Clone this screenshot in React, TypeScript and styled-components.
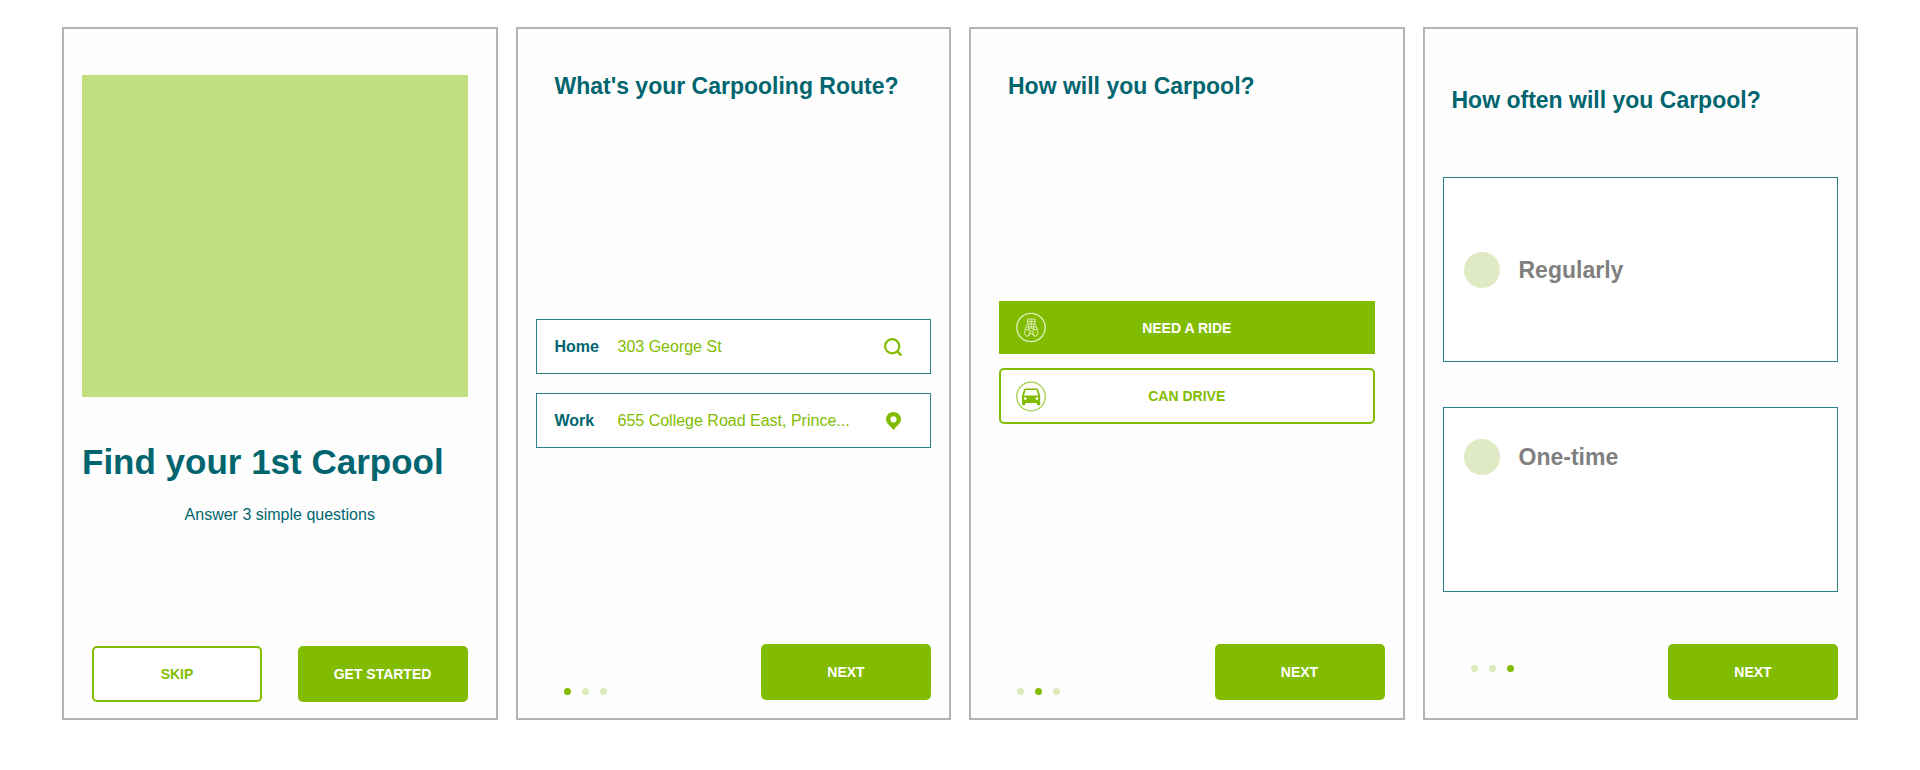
import React, { useState } from 'react';
import styled, { createGlobalStyle } from 'styled-components';

const green = '#82bc00';
const teal = '#00656f';
const paleGreen = '#dfeac4';
const fieldLine = '#2b808a';

const GlobalStyle = createGlobalStyle`
  *, *::before, *::after { box-sizing: border-box; }
  body {
    margin: 0;
    background: #fff;
    color: ${teal};
    font-family: "Liberation Sans", Arial, sans-serif;
  }
  h1, h2, p { margin: 0; }
  button, input { font-family: inherit; }
`;

const Screens = styled.main`
  display: grid;
  grid-template-columns: repeat(auto-fit, minmax(400px, 1fr));
  gap: 18px;
  padding: 27px 62px 50px;
`;

const Screen = styled.section`
  display: flex;
  flex-direction: column;
  padding: 43px 18px 18px;
  border: 2px solid #b4b4b4;
  background: #fefefe;
`;

const WelcomeScreen = styled(Screen)`
  padding: 46px 18px 16px;
`;

const Illustration = styled.div`
  height: 322px;
  margin-right: 10px;
  background: #c1de80;
`;

const Headline = styled.h1`
  margin-top: 44px;
  font-size: 35px;
  line-height: 42px;
`;

const Tagline = styled.p`
  margin-top: 22px;
  font-size: 16px;
  line-height: 20px;
  text-align: center;
`;

const Question = styled.h2<{ $indent: number }>`
  padding-left: ${(p) => p.$indent}px;
  font-size: 23px;
  line-height: 28px;
`;

const Actions = styled.div`
  display: flex;
  justify-content: space-between;
  margin: 121px 10px 0;
`;

const Button = styled.button<{ $outline?: boolean }>`
  width: 170px;
  height: 56px;
  padding: 0;
  border: 2px solid ${green};
  border-radius: 5px;
  background: ${(p) => (p.$outline ? '#fff' : green)};
  color: ${(p) => (p.$outline ? green : '#fff')};
  font-size: 14px;
  font-weight: 700;
  cursor: pointer;
`;

const Footer = styled.footer`
  display: flex;
  justify-content: space-between;
  align-items: flex-end;
  margin-top: auto;
  padding-left: 28px;
`;

const DotRow = styled.div<{ $lift: number }>`
  display: flex;
  gap: 11px;
  padding-bottom: ${(p) => p.$lift}px;
`;

const Dot = styled.span<{ $active: boolean }>`
  width: 7px;
  height: 7px;
  border-radius: 50%;
  background: ${(p) => (p.$active ? green : '#dcebb9')};
`;

const Fields = styled.div`
  display: flex;
  flex-direction: column;
  gap: 19px;
  margin: 219px 0 194px;
`;

const Field = styled.label`
  display: flex;
  align-items: center;
  height: 55px;
  padding: 0 28px 0 18px;
  border: 1px solid ${fieldLine};
  background: #fff;
`;

const FieldName = styled.span`
  flex: none;
  width: 63px;
  font-size: 16px;
  font-weight: 700;
`;

const FieldInput = styled.input`
  flex: 1;
  min-width: 0;
  padding: 0;
  border: 0;
  outline: 0;
  background: transparent;
  color: ${green};
  font-size: 16px;
`;

const Modes = styled.div`
  display: flex;
  flex-direction: column;
  gap: 14px;
  margin: 201px 10px 0;
`;

const ModeButton = styled.button<{ $selected: boolean }>`
  display: grid;
  grid-template-columns: 30px 1fr 30px;
  align-items: center;
  height: ${(p) => (p.$selected ? 53 : 56)}px;
  padding: 0 15px;
  border: 2px solid ${green};
  border-radius: ${(p) => (p.$selected ? 0 : 5)}px;
  background: ${(p) => (p.$selected ? green : '#fff')};
  color: ${(p) => (p.$selected ? '#fff' : green)};
  font-size: 14px;
  font-weight: 700;
  cursor: pointer;
`;

const FrequencyScreen = styled(Screen)`
  padding-top: 57px;
`;

const Frequencies = styled.div`
  display: flex;
  flex-direction: column;
  gap: 45px;
  margin: 63px 0 52px;
`;

const FrequencyCard = styled.label<{ $top?: boolean }>`
  display: flex;
  align-items: ${(p) => (p.$top ? 'flex-start' : 'center')};
  gap: 19px;
  height: 185px;
  padding: ${(p) => (p.$top ? 31 : 0)}px 20px 0;
  border: 1px solid ${fieldLine};
  background: #fff;
  color: #808080;
  font-size: 23px;
  font-weight: 700;
  line-height: 36px;
  cursor: pointer;
`;

const RoundRadio = styled.input`
  appearance: none;
  flex: none;
  width: 36px;
  height: 36px;
  margin: 0;
  border-radius: 50%;
  background: ${paleGreen};
  cursor: pointer;

  &:checked { background: ${green}; }
`;

const SearchIcon = () => (
  <svg width="18" height="18" viewBox="0 0 18 18" fill="none" stroke={green} strokeWidth="2.2" aria-hidden="true">
    <circle cx="8.2" cy="8.2" r="7.1" />
    <path d="M13 13.2 17.3 17.5" strokeWidth="2.4" />
  </svg>
);

const PinIcon = () => (
  <svg width="18" height="18" viewBox="0 0 18 18" fill={green} aria-hidden="true">
    <path
      fillRule="evenodd"
      d="M9.5 0C5.300 0 2 3.200 2 7.200c0 4.300 4.600 6.900 7.500 10.800 2.900-3.900 7.500-6.500 7.500-10.800C17 3.200 13.700 0 9.500 0Zm0 4.300a3.100 3.100 0 1 1 0 6.200 3.100 3.100 0 0 1 0-6.200Z"
    />
  </svg>
);

const RiderIcon = () => (
  <svg width="30" height="31" viewBox="0 0 30 31" fill="none" stroke="#e0efc0" aria-hidden="true">
    <circle cx="15" cy="15.5" r="14.2" strokeWidth="1.3" />
    <g strokeWidth="0.9" strokeLinejoin="round">
      <path d="M11.500 7h7.500v4.800h-7.500zM15.200 7v8.500M11.500 9.400h7.500" />
      <path d="M11.500 11.800 9 17.800M19 11.800l2.500 6M12.800 12v5.500M17.700 12v5.500M10.800 15h9" />
      <path d="M9.500 17.500h2.900l1.300 3-1.700 3.700h-1.700l-1.900-3zM21 17.500h-2.900l-1.300 3 1.700 3.700h1.700l1.900-3z" />
      <path d="M12.400 17.500 15.200 16l2.900 1.500M13.700 20.500l1.500-2 1.600 2M12.200 24.200l3-3.200 3 3.200" />
    </g>
  </svg>
);

const CarIcon = () => (
  <svg width="30" height="31" viewBox="0 0 30 31" fill={green} aria-hidden="true">
    <circle cx="15" cy="15.5" r="14.3" fill="none" stroke="#a4ce48" strokeWidth="1.3" />
    <path
      fillRule="evenodd"
      d="M9.500 7.400h11.200c.8 0 1.300.4 1.500 1.100l2 6.300v8.400c0 .6-.4 1-1 1h-1.200c-.6 0-1-.4-1-1v-1.200H9.200v1.200c0 .6-.4 1-1 1H7c-.6 0-1-.4-1-1v-8.400l2-6.300c.2-.7.700-1.100 1.500-1.100ZM9.600 9 8 14.600h14.200L20.600 9ZM9.300 16.200a1.400 1.400 0 1 0 0 2.800 1.400 1.400 0 0 0 0-2.800Zm11.600 0a1.400 1.400 0 1 0 0 2.800 1.400 1.400 0 0 0 0-2.800Z"
    />
  </svg>
);

const Dots = ({ active, lift = 5 }: { active: number; lift?: number }) => (
  <DotRow $lift={lift}>
    {[0, 1, 2].map((i) => (
      <Dot key={i} $active={i === active} />
    ))}
  </DotRow>
);

export default function App() {
  const [home, setHome] = useState('303 George St');
  const [work, setWork] = useState('655 College Road East, Prince...');
  const [mode, setMode] = useState('ride');

  return (
    <>
      <GlobalStyle />
      <Screens>
        <WelcomeScreen>
          <Illustration />
          <Headline>Find your 1st Carpool</Headline>
          <Tagline>Answer 3 simple questions</Tagline>
          <Actions>
            <Button type="button" $outline>SKIP</Button>
            <Button type="button">GET STARTED</Button>
          </Actions>
        </WelcomeScreen>

        <Screen>
          <Question $indent={19}>What's your Carpooling Route?</Question>
          <Fields>
            <Field>
              <FieldName>Home</FieldName>
              <FieldInput value={home} onChange={(e) => setHome(e.target.value)} />
              <SearchIcon />
            </Field>
            <Field>
              <FieldName>Work</FieldName>
              <FieldInput value={work} onChange={(e) => setWork(e.target.value)} />
              <PinIcon />
            </Field>
          </Fields>
          <Footer>
            <Dots active={0} />
            <Button type="button">NEXT</Button>
          </Footer>
        </Screen>

        <Screen>
          <Question $indent={19}>How will you Carpool?</Question>
          <Modes>
            <ModeButton type="button" $selected={mode === 'ride'} aria-pressed={mode === 'ride'} onClick={() => setMode('ride')}>
              <RiderIcon />
              <span>NEED A RIDE</span>
            </ModeButton>
            <ModeButton type="button" $selected={mode === 'drive'} aria-pressed={mode === 'drive'} onClick={() => setMode('drive')}>
              <CarIcon />
              <span>CAN DRIVE</span>
            </ModeButton>
          </Modes>
          <Footer>
            <Dots active={1} />
            <Button type="button">NEXT</Button>
          </Footer>
        </Screen>

        <FrequencyScreen>
          <Question $indent={9}>How often will you Carpool?</Question>
          <Frequencies>
            <FrequencyCard>
              <RoundRadio type="radio" name="frequency" value="regularly" />
              Regularly
            </FrequencyCard>
            <FrequencyCard $top>
              <RoundRadio type="radio" name="frequency" value="one-time" />
              One-time
            </FrequencyCard>
          </Frequencies>
          <Footer>
            <Dots active={2} lift={28} />
            <Button type="button">NEXT</Button>
          </Footer>
        </FrequencyScreen>
      </Screens>
    </>
  );
}
